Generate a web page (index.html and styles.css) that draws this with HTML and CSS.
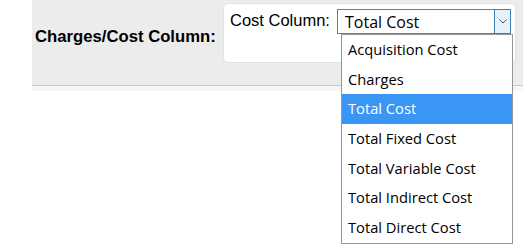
FILE: index.html
```html
<!DOCTYPE html>
<html lang="en">
  <head>
    <meta charset="UTF-8" />
    <title>Charges/Cost Column</title>
    <link rel="stylesheet" href="styles.css">
  </head>
  <body>
    <div class="panel">
      <div class="panel-row">
        <label class="field-label">Charges/Cost Column:</label>
        <div class="field-box">
          <span class="inner-label">Cost Column:</span>
          <div class="select">
            <span class="select-value">Total Cost</span>
            <span class="select-arrow">
              <svg viewBox="0 0 8 5" width="8" height="5">
                <path d="M0.5 0.5 L4 4 L7.5 0.5" fill="none" stroke="#555" stroke-width="1" />
              </svg>
            </span>
            <ul class="select-list">
              <li>Acquisition Cost</li>
              <li>Charges</li>
              <li class="selected">Total Cost</li>
              <li>Total Fixed Cost</li>
              <li>Total Variable Cost</li>
              <li>Total Indirect Cost</li>
              <li>Total Direct Cost</li>
            </ul>
          </div>
        </div>
      </div>
    </div>
  </body>
</html>
```

FILE: styles.css
```css
html,
body {
  height: 100%;
}

body {
  margin: 0px;
  min-height: 250px;
  background-color: rgb(255, 255, 255);
  font-family: 'Liberation Sans', Arial, sans-serif;
}

.panel {
  margin-left: 32px;
  background-color: rgb(236, 236, 236);
  border-bottom: 1px solid rgb(200, 200, 200);
  box-shadow: 0px 5px 0px rgb(246, 246, 246);
}

.panel-row {
  display: flex;
  align-items: flex-start;
  height: 85px;
  padding-top: 3px;
  box-sizing: border-box;
}

.field-label {
  font-size: 16.7px;
  font-weight: bold;
  color: rgb(0, 0, 0);
  margin-left: 3px;
  margin-top: 24px;
  width: 188px;
}

.field-box {
  background-color: rgb(255, 255, 255);
  border: 1px solid rgb(226, 226, 226);
  border-radius: 5px;
  width: 293px;
  height: 60px;
  box-sizing: border-box;
  display: flex;
  align-items: flex-start;
  padding: 5px 0px 0px 6px;
}

.inner-label {
  font-size: 16.5px;
  color: rgb(0, 0, 0);
  margin-top: 2px;
  width: 107px;
}

.select {
  position: relative;
  width: 174px;
  height: 25px;
  box-sizing: border-box;
  border: 1px solid rgb(122, 122, 122);
  background-color: rgb(255, 255, 255);
  display: flex;
  align-items: center;
}

.select-value {
  flex: 1;
  padding-left: 7px;
  font-family: 'Open Sans', 'Noto Sans', sans-serif;
  font-size: 16px;
  color: rgb(0, 0, 0);
}

.select-arrow {
  width: 17px;
  height: 25px;
  margin: -1px -1px -1px 0px;
  box-sizing: border-box;
  border: 1px solid rgb(60, 127, 177);
  background-color: rgb(229, 241, 251);
  display: grid;
  place-items: center;
}

.select-list {
  position: absolute;
  z-index: 10;
  left: 3px;
  top: 24px;
  width: 172px;
  margin: 0px;
  padding: 0px;
  list-style: none;
  box-sizing: border-box;
  border: 1px solid rgb(150, 150, 150);
  background-color: rgb(255, 255, 255);
}

.select-list > li {
  height: 29.7px;
  line-height: 29.7px;
  padding-left: 6px;
  font-family: 'Open Sans', 'Noto Sans', sans-serif;
  font-size: 14.7px;
  color: rgb(0, 0, 0);
  white-space: nowrap;
}

.select-list > li.selected {
  background-color: rgb(58, 150, 245);
  color: rgb(255, 255, 255);
}
```
